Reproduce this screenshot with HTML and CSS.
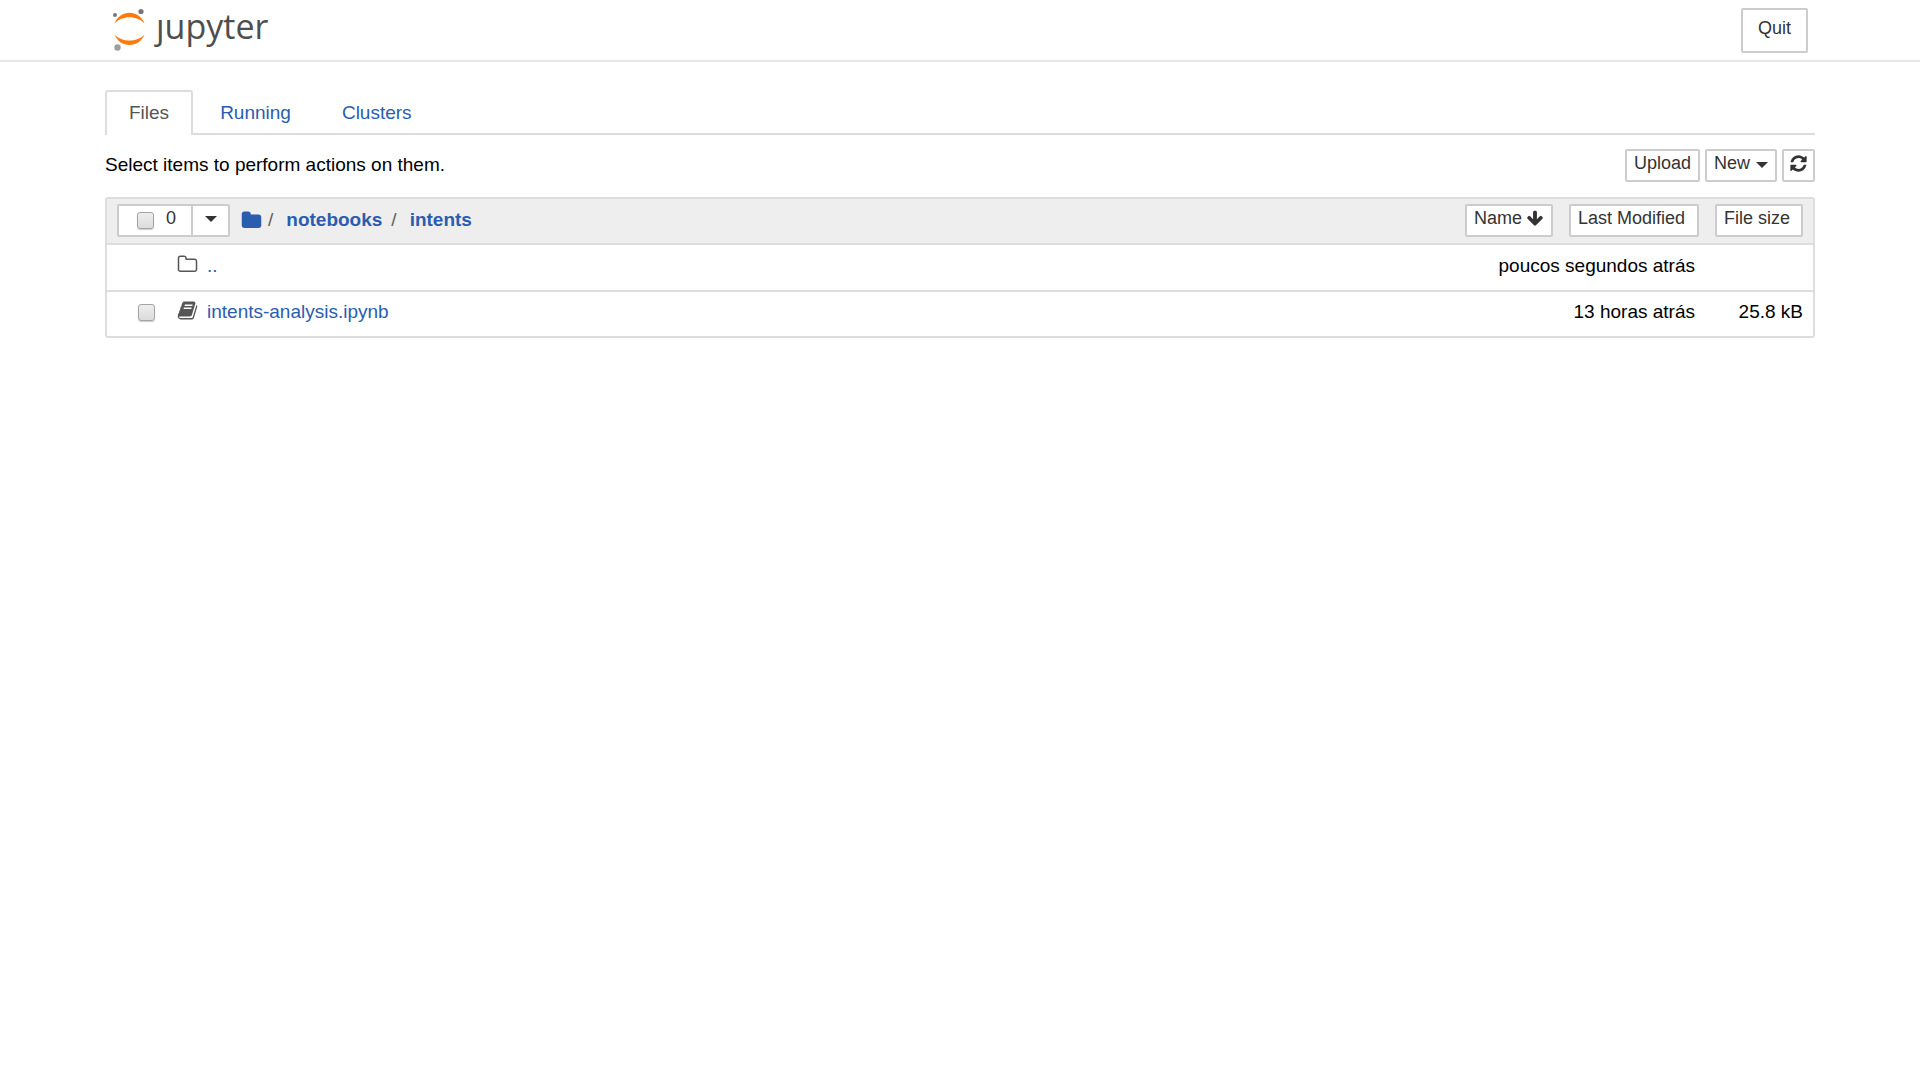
FILE: index.html
```html
<!DOCTYPE html>
<html lang="pt">
<head>
<meta charset="utf-8">
<meta name="viewport" content="width=device-width, initial-scale=1">
<title>Jupyter</title>
<link rel="stylesheet" href="styles.css">
</head>
<body>
<svg class="sprite" aria-hidden="true">
  <symbol id="refresh" viewBox="0 0 1792 1792"><path d="M1639 1056q0 5-1 7-64 268-268 434.500t-478 166.500q-146 0-282.500-55t-243.500-157l-129 129q-19 19-45 19t-45-19-19-45v-448q0-26 19-45t45-19h448q26 0 45 19t19 45-19 45l-137 137q71 66 161 102t187 36q134 0 250-65t186-179q11-17 53-117 8-23 30-23h192q13 0 22.500 9.500t9.500 22.500zm25-800v448q0 26-19 45t-45 19h-448q-26 0-45-19t-19-45 19-45l138-138q-148-137-349-137-134 0-250 65t-186 179q-11 17-53 117-8 23-30 23h-199q-13 0-22.500-9.500t-9.500-22.500v-7q65-268 270-434.500t480-166.500q146 0 284 55.500t245 156.500l130-129q19-19 45-19t45 19 19 45z"/></symbol>
  <symbol id="folder" viewBox="0 0 1792 1792"><path d="M1728 608v704q0 92-66 158t-158 66h-1216q-92 0-158-66t-66-158v-960q0-92 66-158t158-66h320q92 0 158 66t66 158v32h672q92 0 158 66t66 158z"/></symbol>
  <symbol id="folder-open" viewBox="0 0 1792 1792"><path d="M1600 1312v-704q0-40-28-68t-68-28h-704q-40 0-68-28t-28-68v-64q0-40-28-68t-68-28h-320q-40 0-68 28t-28 68v960q0 40 28 68t68 28h1216q40 0 68-28t28-68zm128-704v704q0 92-66 158t-158 66h-1216q-92 0-158-66t-66-158v-960q0-92 66-158t158-66h320q92 0 158 66t66 158v32h672q92 0 158 66t66 158z"/></symbol>
  <symbol id="arrow-down" viewBox="0 0 1792 1792"><path d="M1675 832q0 53-37 90l-651 652q-39 37-91 37-53 0-90-37l-651-652q-38-36-38-90 0-53 38-91l74-75q39-37 91-37 53 0 90 37l294 294v-704q0-52 38-90t90-38h128q52 0 90 38t38 90v704l294-294q37-37 90-37 52 0 91 37l75 75q37 39 37 91z"/></symbol>
  <symbol id="book" viewBox="0 0 1792 1792"><path d="M1703 478q40 57 18 129l-275 906q-19 64-76.500 107.500t-122.500 43.500h-923q-77 0-148.500-53.500t-99.500-131.500q-24-67-2-127 0-4 3-27t4-37q1-8-3-21.500t-3-19.500q2-11 8-21t16.500-23.500 16.500-23.500q23-38 45-91.500t30-91.500q3-10 .5-30t-.5-28q3-11 17-28t17-23q21-36 42-92t25-90q1-9-2.500-32t.5-28q4-13 22-30.500t22-22.500q19-26 42.500-84.500t27.500-96.500q1-8-3-25.500t-2-26.500q2-8 9-18t18-23 17-21q8-12 16.500-30.500t15-35 16-36 19.500-32 26.500-23.500 36-11.500 47.500 5.500l-1 3q38-9 51-9h761q74 0 114 56t18 130l-274 906q-36 119-71.500 153.500t-128.500 34.500h-869q-27 0-38 15-11 16-1 43 24 70 144 70h923q29 0 56-15.500t35-41.500l300-987q7-22 5-57 38 15 59 43zm-1064 2q-4 13 2 22.500t20 9.500h608q13 0 25.500-9.500t16.500-22.500l21-64q4-13-2-22.500t-20-9.500h-608q-13 0-25.500 9.500t-16.500 22.500zm-83 256q-4 13 2 22.500t20 9.500h608q13 0 25.500-9.500t16.500-22.500l21-64q4-13-2-22.500t-20-9.500h-608q-13 0-25.500 9.500t-16.500 22.500z"/></symbol>
</svg>

<header class="header">
  <a class="logo" href="#" aria-label="Jupyter">
    <svg class="logo-mark" viewBox="0 0 36 44" aria-hidden="true">
      <path fill="#ff7a0a" d="M2.500 15.500C8 1 27 1 32.500 15.500C25 7 10 7 2.500 15.500Z"/>
      <path fill="#ff7a0a" d="M2.500 26.500C8 40.500 27 40.500 32.500 26.500C25 34.500 10 34.500 2.500 26.500Z"/>
      <circle cx="3" cy="7" r="2" fill="#767677"/>
      <circle cx="29" cy="3.500" r="2.600" fill="#767677"/>
      <circle cx="5.500" cy="39.500" r="3.200" fill="#9e9e9e"/>
    </svg>
    <span class="logo-text">ȷupyter</span>
  </a>
  <button class="btn btn-quit" type="button">Quit</button>
</header>

<main class="page">
  <nav class="tabs">
    <a class="tab active" href="#files">Files</a>
    <a class="tab" href="#running">Running</a>
    <a class="tab" href="#clusters">Clusters</a>
  </nav>

  <div class="toolbar">
    <p class="hint">Select items to perform actions on them.</p>
    <div class="actions">
      <button class="btn" type="button">Upload</button>
      <button class="btn" type="button">New<span class="caret"></span></button>
      <button class="btn" type="button" aria-label="Refresh"><svg class="icon-small"><use href="#refresh"/></svg></button>
    </div>
  </div>

  <table class="files">
    <thead>
      <tr>
        <th class="col-path">
          <div class="list-head">
            <div class="group">
              <label class="btn select-all"><input class="check" type="checkbox"><span>0</span></label>
              <button class="btn menu" type="button" aria-label="Select by type"><span class="caret"></span></button>
            </div>
            <nav class="crumbs" aria-label="Path">
              <a href="#root" aria-label="Home"><svg class="icon"><use href="#folder"/></svg></a>
              <span class="slash">/</span>
              <a class="crumb" href="#notebooks">notebooks</a>
              <span class="slash">/</span>
              <a class="crumb" href="#intents">intents</a>
            </nav>
          </div>
        </th>
        <th class="col-name"><button class="btn wide" type="button">Name<svg class="icon-small"><use href="#arrow-down"/></svg></button></th>
        <th class="col-modified"><button class="btn wide" type="button">Last Modified</button></th>
        <th class="col-size"><button class="btn wide" type="button">File size</button></th>
      </tr>
    </thead>
    <tbody>
      <tr>
        <td><div class="item"><span class="check-space"></span><svg class="icon"><use href="#folder-open"/></svg><a href="#up">..</a></div></td>
        <td class="modified" colspan="2">poucos segundos atrás</td>
        <td class="size"></td>
      </tr>
      <tr>
        <td><div class="item"><span class="check-space"><input class="check" type="checkbox" aria-label="intents-analysis.ipynb"></span><svg class="icon"><use href="#book"/></svg><a href="#notebook">intents-analysis.ipynb</a></div></td>
        <td class="modified" colspan="2">13 horas atrás</td>
        <td class="size">25.8 kB</td>
      </tr>
    </tbody>
  </table>
</main>
</body>
</html>
```
FILE: styles.css
```css
* { box-sizing: border-box; }

body {
  margin: 0;
  background: #fff;
  color: #000;
  font-family: "Liberation Sans", Arial, sans-serif;
  font-size: 19px;
  line-height: 28px;
}

a { color: #2a5db0; text-decoration: none; }
.sprite { display: none; }

.header {
  display: flex;
  justify-content: space-between;
  align-items: flex-start;
  padding: 8px 112px 7px;
  border-bottom: 2px solid #e7e7e7;
}

.logo { display: flex; height: 44px; }
.logo-mark { width: 36px; height: 44px; }
.logo-text {
  margin-left: 8px;
  color: #4e4e4e;
  font-family: "Open Sans", "Noto Sans", sans-serif;
  font-size: 34px;
  line-height: 36px;
}

.btn {
  display: flex;
  align-items: center;
  height: 33px;
  padding: 0 7px 4px;
  border: 2px solid #ccc;
  border-radius: 2px;
  background: #fff;
  color: #333;
  font: 18px/25px "Liberation Sans", Arial, sans-serif;
  white-space: nowrap;
}
.btn-quit { height: 45px; padding: 0 15px 5px; }

.caret {
  margin: 2px 0 0 6px;
  border: solid transparent;
  border-width: 6px 6px 0;
  border-top-color: #333;
}

.icon { width: 21px; height: 21px; fill: #555; }
.icon-small { width: 19px; height: 19px; fill: #333; }
.actions .icon-small { margin: 0 -2px; }

.page { padding: 28px 105px 0; }

.tabs { display: flex; gap: 3px; border-bottom: 2px solid #ddd; }
.tab {
  height: 43px;
  padding: 7px 22px 0;
  border: 2px solid transparent;
  border-bottom: 0;
  border-radius: 3px 3px 0 0;
}
.tab.active {
  height: 45px;
  margin-bottom: -2px;
  border-color: #ddd;
  background: #fff;
  color: #555;
}

.toolbar { display: flex; justify-content: space-between; padding: 14px 0 15px; }
.hint { margin: 0; line-height: 32px; }
.actions { display: flex; gap: 5px; }

.files {
  width: 100%;
  table-layout: fixed;
  border: 2px solid #ddd;
  border-radius: 3px;
  border-spacing: 0;
}
.files th, .files td { padding: 0; text-align: left; font-weight: normal; }
.files th { height: 46px; padding-bottom: 2px; background: #eee; border-bottom: 2px solid #ddd; }
.files td { padding-bottom: 4px; }
.files tbody tr:first-child td { height: 47px; border-bottom: 2px solid #ddd; }
.files tbody tr:last-child td { height: 44px; }

.files .col-name { width: 88px; }
.files .col-modified { width: 146px; padding-left: 16px; }
.files .col-size { width: 114px; padding-left: 16px; padding-right: 10px; }
.files .modified { padding-right: 4px; text-align: right; }
.files .size { padding-right: 10px; text-align: right; }
.wide { width: 100%; gap: 4px; }

.list-head { display: flex; align-items: center; padding-left: 10px; }
.group { display: flex; }
.select-all { width: 76px; padding-left: 18px; gap: 12px; border-radius: 2px 0 0 2px; }
.select-all .check { margin-top: 5px; }
.menu { width: 39px; margin-left: -2px; justify-content: center; border-radius: 0 2px 2px 0; }
.menu .caret { margin-left: 0; }

.crumbs { display: flex; align-items: center; margin-left: 11px; }
.crumbs a { display: flex; }
.crumbs .icon { fill: #2a5db0; }
.crumb { font-weight: bold; }
.slash { margin: 0 13px 0 6px; color: #5e5e5e; }
.crumb + .slash { margin-left: 9px; }

.item { display: flex; align-items: center; }
.item .icon { margin: 0 9px 3px 0; }
.check-space { display: flex; width: 70px; padding-left: 31px; }

.check {
  appearance: none;
  width: 17px;
  height: 17px;
  margin: 0;
  border: 1px solid #a3a3a3;
  border-radius: 3px;
  background: linear-gradient(#ededed, #dcdcdc);
  box-shadow: 0 1px 1px #ccc;
}
.check:checked { background: #2a5db0; }
```
